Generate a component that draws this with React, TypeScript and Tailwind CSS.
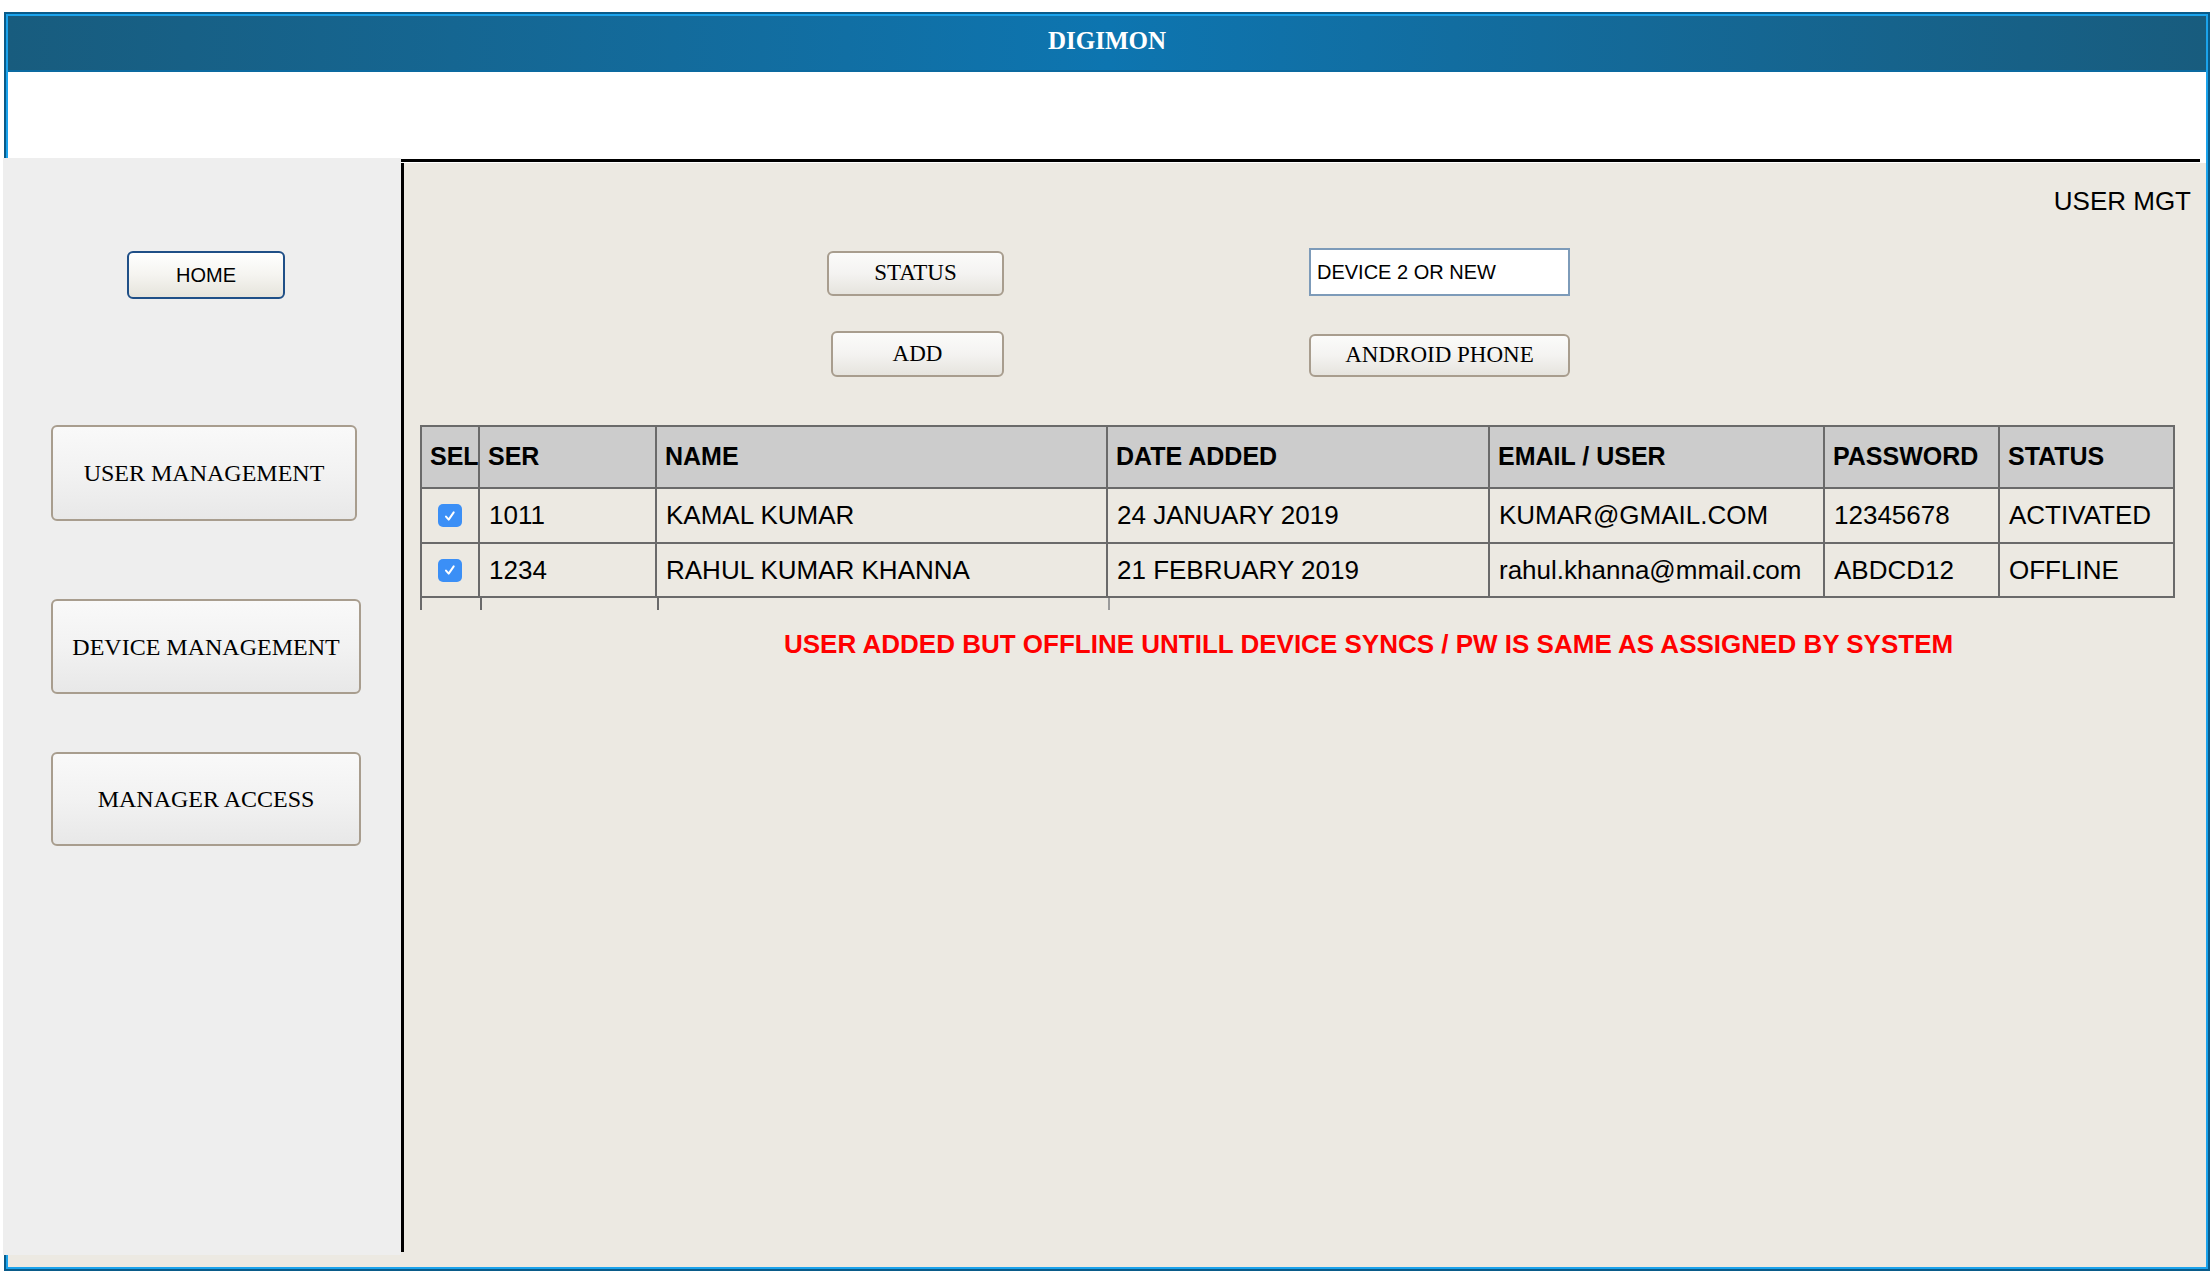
import React from "react";

const rows = [
  { ser: "1011", name: "KAMAL KUMAR", date: "24 JANUARY 2019", email: "KUMAR@GMAIL.COM", pw: "12345678", status: "ACTIVATED" },
  { ser: "1234", name: "RAHUL KUMAR KHANNA", date: "21 FEBRUARY 2019", email: "rahul.khanna@mmail.com", pw: "ABDCD12", status: "OFFLINE" },
];

const headers = ["SEL", "SER", "NAME", "DATE ADDED", "EMAIL / USER", "PASSWORD", "STATUS"];

function Check() {
  return (
    <div className="w-[24px] h-[23px] rounded-[5px] bg-[#3b8ff6] flex items-center justify-center">
      <svg width="16" height="16" viewBox="0 0 16 16" fill="none">
        <path d="M4 8.6l2.7 3 5-7.2" stroke="white" strokeWidth="2" strokeLinecap="round" strokeLinejoin="round" />
      </svg>
    </div>
  );
}

function SideButton({ label, className }: { label: string; className: string }) {
  return (
    <button
      className={`flex items-center justify-center rounded-[6px] border-2 border-[#a89d8e] bg-linear-to-b from-[#f9f9f9] via-[#f2f2f2] to-[#e8e8e8] font-['Liberation_Serif','Times_New_Roman',serif] text-[24px] text-black ${className}`}
    >
      {label}
    </button>
  );
}

function TopButton({ label, className }: { label: string; className: string }) {
  return (
    <button
      className={`flex items-center justify-center rounded-[6px] border-2 border-[#a89d8e] bg-linear-to-b from-[#fbfbfa] via-[#f4f3f1] to-[#e6e4de] font-['Liberation_Serif','Times_New_Roman',serif] text-[23px] text-black ${className}`}
    >
      {label}
    </button>
  );
}

export default function App() {
  return (
    <div className="w-[2212px] h-[1272px] bg-white overflow-hidden font-['Liberation_Sans',Arial,sans-serif] text-black">
      {/* outer frame */}
      <div className="ml-[4px] mt-[12px] w-[2206px] h-[1259px] border-2 border-[#0a5b89]">
        <div className="h-full flex flex-col border-2 border-[#1ba3ec]">
          {/* title bar */}
          <div className="h-[56px] shrink-0 flex items-center justify-center pb-[4px] border-b-2 border-[#0c6aa0] bg-linear-to-r from-[#185c7e] via-[#0d75b0] to-[#185c7e]">
            <span className="font-['Liberation_Serif','Times_New_Roman',serif] font-bold text-[25px] text-white">DIGIMON</span>
          </div>
          <div className="h-[86px] shrink-0 bg-white" />

          {/* body */}
          <div className="flex-1 flex bg-[#ece9e2]">
            {/* sidebar */}
            <aside className="-ml-[5px] w-[398px] shrink-0 mb-[12px] bg-[#eeeeee] flex flex-col">
              <button className="mt-[93px] ml-[124px] w-[158px] h-[48px] flex items-center justify-center rounded-[6px] border-2 border-[#1f4f87] bg-linear-to-b from-[#ffffff] via-[#f5f4f0] to-[#e6e4dc] text-[20px]">
                HOME
              </button>
              <SideButton label="USER MANAGEMENT" className="mt-[126px] ml-[48px] w-[306px] h-[96px]" />
              <SideButton label="DEVICE MANAGEMENT" className="mt-[78px] ml-[48px] w-[310px] h-[95px]" />
              <SideButton label="MANAGER ACCESS" className="mt-[58px] ml-[48px] w-[310px] h-[94px]" />
            </aside>

            {/* main */}
            <div className="flex-1 flex flex-col">
              <div className="h-[5px] bg-white pt-[1px] pr-[6px]">
                <div className="h-[3px] bg-black" />
              </div>
              <main className="flex-1 mb-[15px] border-l-[3px] border-black flex flex-col">
                <div className="flex justify-end pt-[23px] pr-[15px] text-[26px] leading-[30px]">USER MGT</div>

                {/* controls */}
                <div className="flex items-start mt-[32px]">
                  <div className="ml-[423px] w-[177px] flex flex-col items-end">
                    <TopButton label="STATUS" className="mt-[3px] w-[177px] h-[45px]" />
                    <TopButton label="ADD" className="mt-[35px] w-[173px] h-[46px]" />
                  </div>
                  <div className="ml-[305px] w-[261px] flex flex-col">
                    <div className="h-[48px] border-2 border-[#7d9bb9] bg-white flex items-center pl-[6px] text-[20px]">
                      DEVICE 2 OR NEW
                    </div>
                    <TopButton label="ANDROID PHONE" className="mt-[38px] w-[261px] h-[43px]" />
                  </div>
                </div>

                {/* table */}
                <div className="ml-[16px] mt-[48px] w-[1755px]">
                  <div className="grid grid-cols-[58px_177px_451px_382px_335px_175px_175px] border-l-2 border-t-2 border-[#6a6a6a]">
                    {headers.map((h) => (
                      <div
                        key={h}
                        className="h-[62px] flex items-center pl-[8px] bg-[#cccccc] border-r-2 border-b-2 border-[#6a6a6a] font-bold text-[25px] whitespace-nowrap"
                      >
                        {h}
                      </div>
                    ))}
                    {rows.map((r, i) => (
                      <React.Fragment key={r.ser}>
                        <div className={`${i === 0 ? "h-[55px]" : "h-[54px]"} flex items-center justify-center border-r-2 border-b-2 border-[#6a6a6a]`}>
                          <Check />
                        </div>
                        {[r.ser, r.name, r.date, r.email, r.pw, r.status].map((v, j) => (
                          <div
                            key={j}
                            className={`${i === 0 ? "h-[55px]" : "h-[54px]"} flex items-center pl-[9px] border-r-2 border-b-2 border-[#6a6a6a] text-[26px] whitespace-nowrap`}
                          >
                            {v}
                          </div>
                        ))}
                      </React.Fragment>
                    ))}
                  </div>
                  <div className="flex h-[12px]">
                    <div className="w-[60px] border-l-2 border-[#6a6a6a]" />
                    <div className="w-[177px] border-l-2 border-[#6a6a6a]" />
                    <div className="w-[451px] border-l-2 border-[#6a6a6a]" />
                    <div className="w-[382px] border-l-2 border-[#9a9a9a]" />
                  </div>
                </div>

                <div className="mt-[19px] ml-[380px] text-[26px] leading-[30px] font-bold text-[#ff0000] whitespace-nowrap">
                  USER ADDED BUT OFFLINE UNTILL DEVICE SYNCS / PW IS SAME AS ASSIGNED BY SYSTEM
                </div>
              </main>
            </div>
          </div>
        </div>
      </div>
    </div>
  );
}
